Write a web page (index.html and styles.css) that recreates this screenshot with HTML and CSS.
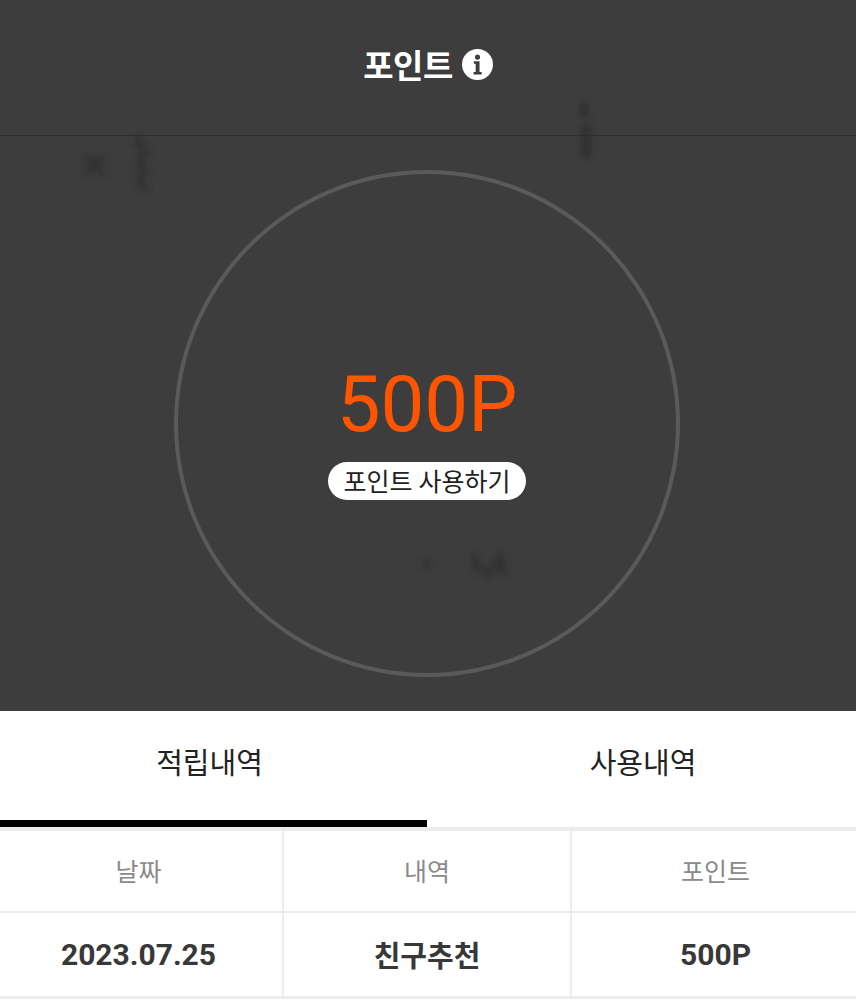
FILE: index.html
```html
<!DOCTYPE html>
<html lang="ko">
<head>
  <meta charset="UTF-8" />
  <meta name="viewport" content="width=device-width, initial-scale=1.0" />
  <title>포인트</title>
  <link rel="stylesheet" href="styles.css">
</head>
<body>
  <section class="hero">
    <!-- dark marks showing through the background -->
    <svg class="smudges" viewBox="0 0 856 711" aria-hidden="true">
      <defs><filter id="soft" x="-50%" y="-50%" width="200%" height="200%"><feGaussianBlur stdDeviation="3" /></filter></defs>
      <g filter="url(#soft)" fill="none" stroke="#323232" stroke-width="7" stroke-linecap="round" stroke-linejoin="round">
        <path d="M88 158l14 14M102 158l-14 14" />
        <path d="M137 140l8 12-6 10 7 9-8 8 7 9" />
        <path d="M584 106v8" stroke-width="10" />
        <path d="M586 130v22" stroke-width="12" />
        <path d="M426 564h2" stroke-width="8" />
        <path d="M474 556l2 12 7 1 5 4 6-4 6-13M501 560l3 12" />
      </g>
    </svg>

    <header class="top-bar">
      <h1 class="title">포인트</h1>
      <svg class="info-icon" viewBox="0 0 32 32" aria-label="정보">
        <circle cx="16" cy="16" r="16" fill="#fff" />
        <circle cx="16" cy="8.4" r="2.6" fill="#3d3d3d" />
        <path d="M12.2 12.6h5.9v11.2h2.2v2.6h-8.4v-2.6h2.2v-8.6h-1.9z" fill="#3d3d3d" />
      </svg>
    </header>

    <div class="hero-body">
      <div class="ring">
        <div class="amount">500P</div>
        <button class="use-btn">포인트 사용하기</button>
      </div>
    </div>
  </section>

  <nav class="tabs">
    <button class="tab active">적립내역</button>
    <button class="tab">사용내역</button>
  </nav>

  <table class="history">
    <thead>
      <tr><th>날짜</th><th>내역</th><th>포인트</th></tr>
    </thead>
    <tbody>
      <tr><td>2023.07.25</td><td class="label">친구추천</td><td>500P</td></tr>
    </tbody>
  </table>
</body>
</html>
```

FILE: styles.css
```css
:root {
  --hero-bg: #3d3d3d;
  --accent: #ff5500;
  --line: #ececec;
  --text-main: #383838;
  --text-muted: #8a8a8a;
}
* { box-sizing: border-box; margin: 0; padding: 0; }
body {
  background: #fff;
  font-family: Roboto, "Noto Sans CJK KR", sans-serif;
  overflow: hidden;
}
.hero {
  background: var(--hero-bg);
  height: 711px;
  position: relative;
  overflow: hidden;
}
.smudges { position: absolute; left: 0; top: 0; width: 856px; height: 711px; }
.top-bar {
  height: 136px;
  border-bottom: 1px solid #2e2e2e;
  display: flex;
  align-items: center;
  justify-content: center;
  gap: 9px;
  padding-bottom: 7px;
  position: relative;
}
.title { font-size: 33px; font-weight: 700; color: #fff; letter-spacing: -0.5px; }
.info-icon { width: 31px; height: 31px; }
.hero-body { display: flex; justify-content: center; padding-top: 34px; padding-right: 2px; position: relative; }
.ring {
  width: 506px;
  height: 507px;
  border: 4px solid #5a5a5a;
  border-radius: 50%;
  display: flex;
  flex-direction: column;
  align-items: center;
  padding-top: 187px;
}
.amount { font-size: 78px; line-height: 88px; font-weight: 400; color: var(--accent); }
.use-btn {
  margin-top: 13px;
  height: 38px;
  padding: 0 15px 3px;
  background: #fff;
  border: none;
  border-radius: 19px;
  font-family: inherit;
  font-size: 25px;
  color: #222;
}
.tabs { display: grid; grid-template-columns: 427px 1fr; height: 120px; border-bottom: 4px solid var(--line); }
.tab {
  background: #fff;
  border: none;
  border-bottom: 7px solid transparent;
  font-family: inherit;
  font-size: 29px;
  color: #222;
  padding-bottom: 10px;
}
.tab:first-child { padding-right: 8px; }
.tab:last-child { padding-left: 3px; }
.tab.active { border-bottom-color: #000; }
.history { width: 100%; border-collapse: collapse; table-layout: fixed; }
.history th, .history td { text-align: center; border: 2px solid var(--line); }
.history th:first-child, .history td:first-child { width: 283px; border-left: none; padding-right: 5px; }
.history th:nth-child(2), .history td:nth-child(2) { width: 288px; }
.history th:last-child, .history td:last-child { border-right: none; padding-left: 3px; }
.history thead tr:first-child th { border-top: none; padding-bottom: 3px; }
.history th { height: 81px; font-size: 25px; font-weight: 400; color: var(--text-muted); }
.history td { height: 85px; border-bottom-width: 3px; font-size: 30px; font-weight: 700; color: var(--text-main); }
.history td.label { font-size: 29px; }
```
